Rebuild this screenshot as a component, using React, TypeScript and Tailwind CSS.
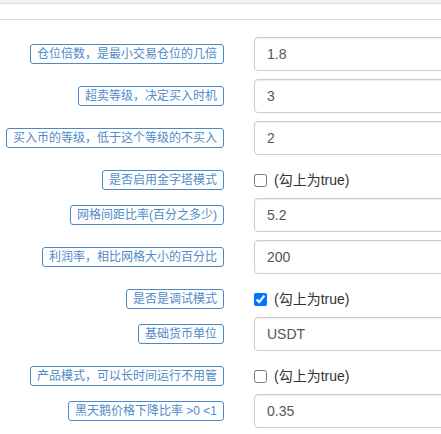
import React from "react";

type Row =
  | { kind: "input"; label: string; value: string; mt: number }
  | { kind: "check"; label: string; checked: boolean };

const rows: Row[] = [
  { kind: "input", label: "仓位倍数，是最小交易仓位的几倍", value: "1.8", mt: 17 },
  { kind: "input", label: "超卖等级，决定买入时机", value: "3", mt: 8 },
  { kind: "input", label: "买入币的等级，低于这个等级的不买入", value: "2", mt: 8 },
  { kind: "check", label: "是否启用金字塔模式", checked: false },
  { kind: "input", label: "网格间距比率(百分之多少)", value: "5.2", mt: 0 },
  { kind: "input", label: "利润率，相比网格大小的百分比", value: "200", mt: 8 },
  { kind: "check", label: "是否是调试模式", checked: true },
  { kind: "input", label: "基础货币单位", value: "USDT", mt: 0 },
  { kind: "check", label: "产品模式，可以长时间运行不用管", checked: false },
  { kind: "input", label: "黑天鹅价格下降比率 >0 <1", value: "0.35", mt: 0 },
];

const font = { fontFamily: '"Liberation Sans", Arial, "Noto Sans CJK SC", sans-serif' };

function Label({ text }: { text: string }) {
  return (
    <div className="w-[224px] shrink-0 flex justify-end">
      <span className="h-[20px] flex items-center px-[6px] border border-[#4a89c8] rounded-[3px] text-[12px] leading-none text-[#4f8bc8] whitespace-nowrap">
        {text}
      </span>
    </div>
  );
}

export default function App() {
  return (
    <div className="w-[441px] h-[434px] overflow-hidden bg-white" style={font}>
      <div className="h-[4px] bg-[#f2f2f2] border-b border-[#dddddd]" />
      <div className="h-[16px] border-b border-[#dddddd]" />
      {rows.map((r, i) =>
        r.kind === "input" ? (
          <div key={i} className="flex items-center h-[34px]" style={{ marginTop: r.mt }}>
            <Label text={r.label} />
            <input
              readOnly
              value={r.value}
              className="ml-[30px] w-[220px] shrink-0 h-[34px] border border-[#cccccc] rounded-[4px] px-[12px] text-[14px] text-[#555555] shadow-[inset_0_1px_1px_rgba(0,0,0,0.075)] outline-none"
              style={font}
            />
          </div>
        ) : (
          <div key={i} className="flex items-center h-[43px] pt-[7px] box-border">
            <Label text={r.label} />
            <label className="ml-[30px] flex items-center text-[14px] text-[#333333]">
              <input
                type="checkbox"
                readOnly
                checked={r.checked}
                className="m-0 w-[13px] h-[13px] mr-[7px]"
              />
              <span>(勾上为true)</span>
            </label>
          </div>
        )
      )}
    </div>
  );
}
